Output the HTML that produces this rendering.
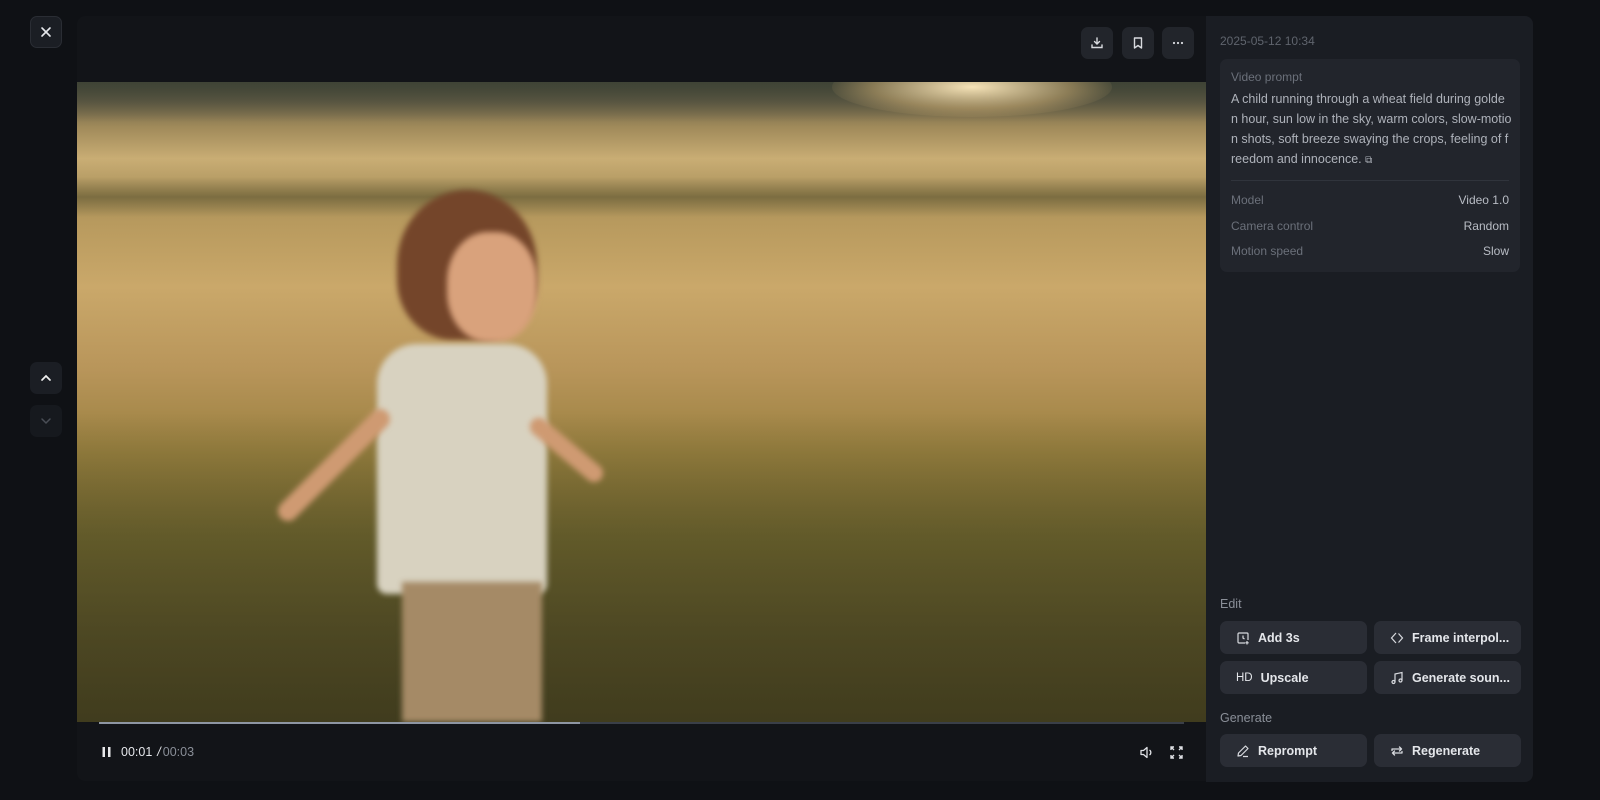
<!DOCTYPE html>
<html><head><meta charset="utf-8"><style>
*{box-sizing:border-box;margin:0;padding:0}
body{width:1600px;height:800px;background:#0f1115;font-family:"Liberation Sans",sans-serif;position:relative;overflow:hidden;color:#d4d6db}
.sq{position:absolute;width:32px;height:32px;border-radius:7px;background:#1b1e24;display:flex;align-items:center;justify-content:center}
.vid{position:absolute;left:77px;top:16px;width:1129px;height:765px;background:#121418;border-radius:8px 0 0 8px;overflow:hidden}
.img{position:absolute;left:0;top:66px;width:1129px;height:640px;overflow:hidden;
background:linear-gradient(180deg,#4a4a36 0%,#6b6248 3%,#a08a5a 7%,#c9ad74 12%,#a8905a 18%,#b89a5e 22%,#caa86a 32%,#b8955a 45%,#9a803f 58%,#7c6830 72%,#64552a 86%,#554a24 100%)}
.fig{position:absolute;filter:blur(3px)}
.panel{position:absolute;left:1206px;top:16px;width:327px;height:766px;background:#1a1d23;border-radius:0 8px 8px 0}
.card{position:absolute;left:14px;top:43px;width:300px;height:213px;background:#22252c;border-radius:7px}
.btn{position:absolute;width:147px;height:33px;background:#2a2d35;border-radius:7px;font-size:12.5px;font-weight:bold;color:#e4e6ea;display:flex;align-items:center;padding-left:16px;gap:8px}
.row{position:absolute;left:11px;right:11px;font-size:12px;display:flex;justify-content:space-between}
.row span:first-child{color:#6b707a}.row span:last-child{color:#b8bcc4}
</style></head><body>
<div class="sq" style="left:30px;top:16px;border:1px solid #2a2d34"><svg width="14" height="14" viewBox="0 0 14 14"><path d="M3 3l8 8M11 3l-8 8" stroke="#e6e8ec" stroke-width="1.6" stroke-linecap="round"/></svg></div>
<div class="sq" style="left:30px;top:362px"><svg width="14" height="14" viewBox="0 0 14 14"><path d="M3 9l4-4 4 4" stroke="#f0f0f0" stroke-width="1.7" fill="none" stroke-linecap="round"/></svg></div>
<div class="sq" style="left:30px;top:405px;background:#16191e"><svg width="14" height="14" viewBox="0 0 14 14"><path d="M3 5l4 4 4-4" stroke="#4a4e56" stroke-width="1.5" fill="none" stroke-linecap="round"/></svg></div>
<div class="vid">
 <div class="img">
  <div style="position:absolute;left:0;top:0;width:100%;height:40px;background:linear-gradient(180deg,rgba(60,66,54,.8),rgba(60,66,54,0))"></div>
  <div style="position:absolute;left:755px;top:-25px;width:280px;height:60px;border-radius:50%;background:radial-gradient(ellipse at center,rgba(255,235,190,.95),rgba(240,200,130,.4) 50%,rgba(240,200,130,0) 75%)"></div>
  <div style="position:absolute;left:0;top:95px;width:100%;height:40px;background:linear-gradient(180deg,rgba(80,80,40,0),rgba(80,75,40,.5),rgba(80,80,40,0))"></div>
  <div style="position:absolute;left:0;top:330px;width:100%;height:310px;background:linear-gradient(180deg,rgba(70,70,30,0),rgba(70,75,35,.5) 40%,rgba(50,50,25,.6))"></div>
  <div class="fig" style="left:320px;top:108px;width:140px;height:150px;border-radius:50% 50% 40% 40%;background:#74452a"></div>
  <div class="fig" style="left:370px;top:150px;width:90px;height:110px;border-radius:45%;background:#d9a27c"></div>
  <div class="fig" style="left:300px;top:262px;width:170px;height:250px;border-radius:40px 40px 10px 10px;background:#d8d2c0"></div>
  <div class="fig" style="left:325px;top:500px;width:140px;height:140px;background:#a58a66"></div>
  <div class="fig" style="left:160px;top:320px;width:150px;height:20px;border-radius:10px;background:#cf9a72;transform:rotate(-45deg);transform-origin:right center"></div>
  <div class="fig" style="left:455px;top:330px;width:90px;height:18px;border-radius:10px;background:#cf9a72;transform:rotate(40deg);transform-origin:left center"></div>
 </div>
 <div class="sq" style="left:1004px;top:11px;background:#22252b"><svg width="14" height="14" viewBox="0 0 14 14" fill="none" stroke="#d8dadf" stroke-width="1.4" stroke-linecap="round"><path d="M7 2v6M4.5 5.5L7 8l2.5-2.5M2 9v2.5h10V9"/></svg></div>
 <div class="sq" style="left:1045px;top:11px;background:#22252b"><svg width="14" height="14" viewBox="0 0 14 14" fill="none" stroke="#d8dadf" stroke-width="1.4" stroke-linejoin="round"><path d="M3.5 2h7v10L7 9.5 3.5 12z"/></svg></div>
 <div class="sq" style="left:1085px;top:11px;background:#22252b"><svg width="14" height="14" viewBox="0 0 14 14" fill="#d8dadf"><circle cx="3" cy="7" r="1.1"/><circle cx="7" cy="7" r="1.1"/><circle cx="11" cy="7" r="1.1"/></svg></div>
 <div style="position:absolute;left:22px;top:706px;width:1085px;height:2px;background:#3a3f48"></div>
 <div style="position:absolute;left:22px;top:706px;width:481px;height:2px;background:#8e96a3"></div>
 <div style="position:absolute;left:23px;top:729px;display:flex;align-items:center;font-size:12.5px">
  <svg width="14" height="14" viewBox="0 0 14 14" fill="#e8e8ea"><rect x="2.5" y="2" width="2.5" height="10"/><rect x="8" y="2" width="2.5" height="10"/></svg>
  <span style="margin-left:7px;color:#e4e6ea">00:01</span><span style="margin-left:5px;color:#e4e6ea;font-style:italic">/</span><span style="margin-left:2px;color:#8a8f98">00:03</span>
 </div>
 <svg style="position:absolute;left:1062px;top:729px" width="15" height="15" viewBox="0 0 15 15" fill="none" stroke="#e0e2e6" stroke-width="1.3" stroke-linejoin="round"><path d="M2 5.5h2.5L8 2.5v10L4.5 9.5H2z M10.5 5a3 3 0 0 1 0 5"/></svg>
 <svg style="position:absolute;left:1092px;top:729px" width="15" height="15" viewBox="0 0 15 15" fill="none" stroke="#e0e2e6" stroke-width="1.4"><path d="M2 5V2h3M10 2h3v3M13 10v3h-3M5 13H2v-3M2 2l3 3M13 2l-3 3M13 13l-3-3M2 13l3-3"/></svg>
</div>
<div class="panel">
 <div style="position:absolute;left:14px;top:18px;font-size:12px;color:#5f646d">2025-05-12 10:34</div>
 <div class="card">
  <div style="position:absolute;left:11px;top:11px;font-size:12px;color:#6b707a">Video prompt</div>
  <div style="position:absolute;left:11px;top:30px;width:284px;font-size:12.5px;line-height:20px;color:#aeb2ba;white-space:nowrap">A child running through a wheat field during golde<br>n hour, sun low in the sky, warm colors, slow-motio<br>n shots, soft breeze swaying the crops, feeling of f<br>reedom and innocence. <span style="font-size:10px">⧉</span></div>
  <div style="position:absolute;left:11px;right:11px;top:121px;height:1px;background:#30343c"></div>
  <div class="row" style="top:134px"><span>Model</span><span>Video 1.0</span></div>
  <div class="row" style="top:160px"><span>Camera control</span><span>Random</span></div>
  <div class="row" style="top:185px"><span>Motion speed</span><span>Slow</span></div>
 </div>
 <div style="position:absolute;left:14px;top:581px;font-size:12.5px;color:#8a8f98">Edit</div>
 <div class="btn" style="left:14px;top:605px"><svg width="14" height="14" viewBox="0 0 14 14" fill="none" stroke="#d8dadf" stroke-width="1.2"><path d="M9 12H3a1 1 0 0 1-1-1V3a1 1 0 0 1 1-1h8a1 1 0 0 1 1 1v6M7 4.5V7l1.5 1M11 10v3.5M9.3 11.8h3.4"/></svg>Add 3s</div>
 <div class="btn" style="left:168px;top:605px"><svg width="14" height="14" viewBox="0 0 14 14" fill="none" stroke="#d8dadf" stroke-width="1.2"><path d="M6 2L1.5 7 6 12 M8.5 2.5L12.5 7l-4 4.5"/></svg>Frame interpol...</div>
 <div class="btn" style="left:14px;top:645px"><span style="font-size:11.5px;font-weight:normal">HD</span>Upscale</div>
 <div class="btn" style="left:168px;top:645px"><svg width="14" height="14" viewBox="0 0 14 14" fill="none" stroke="#d8dadf" stroke-width="1.2"><path d="M5 11V3l7-1.5v8"/><circle cx="3.5" cy="11" r="1.5"/><circle cx="10.5" cy="9.5" r="1.5"/></svg>Generate soun...</div>
 <div style="position:absolute;left:14px;top:695px;font-size:12.5px;color:#8a8f98">Generate</div>
 <div class="btn" style="left:14px;top:718px"><svg width="14" height="14" viewBox="0 0 14 14" fill="none" stroke="#d8dadf" stroke-width="1.2" stroke-linejoin="round"><path d="M2 12l.5-3L9.5 2l2.5 2.5L5 11.5zM7 12.5h5"/></svg>Reprompt</div>
 <div class="btn" style="left:168px;top:718px"><svg width="14" height="14" viewBox="0 0 14 14" fill="none" stroke="#d8dadf" stroke-width="1.3" stroke-linecap="round" stroke-linejoin="round"><path d="M2 6.5V5h9.5M9.5 3l2 2-2 2M12 7.5V9H2.5M4.5 11l-2-2 2-2"/></svg>Regenerate</div>
</div>
</body></html>
